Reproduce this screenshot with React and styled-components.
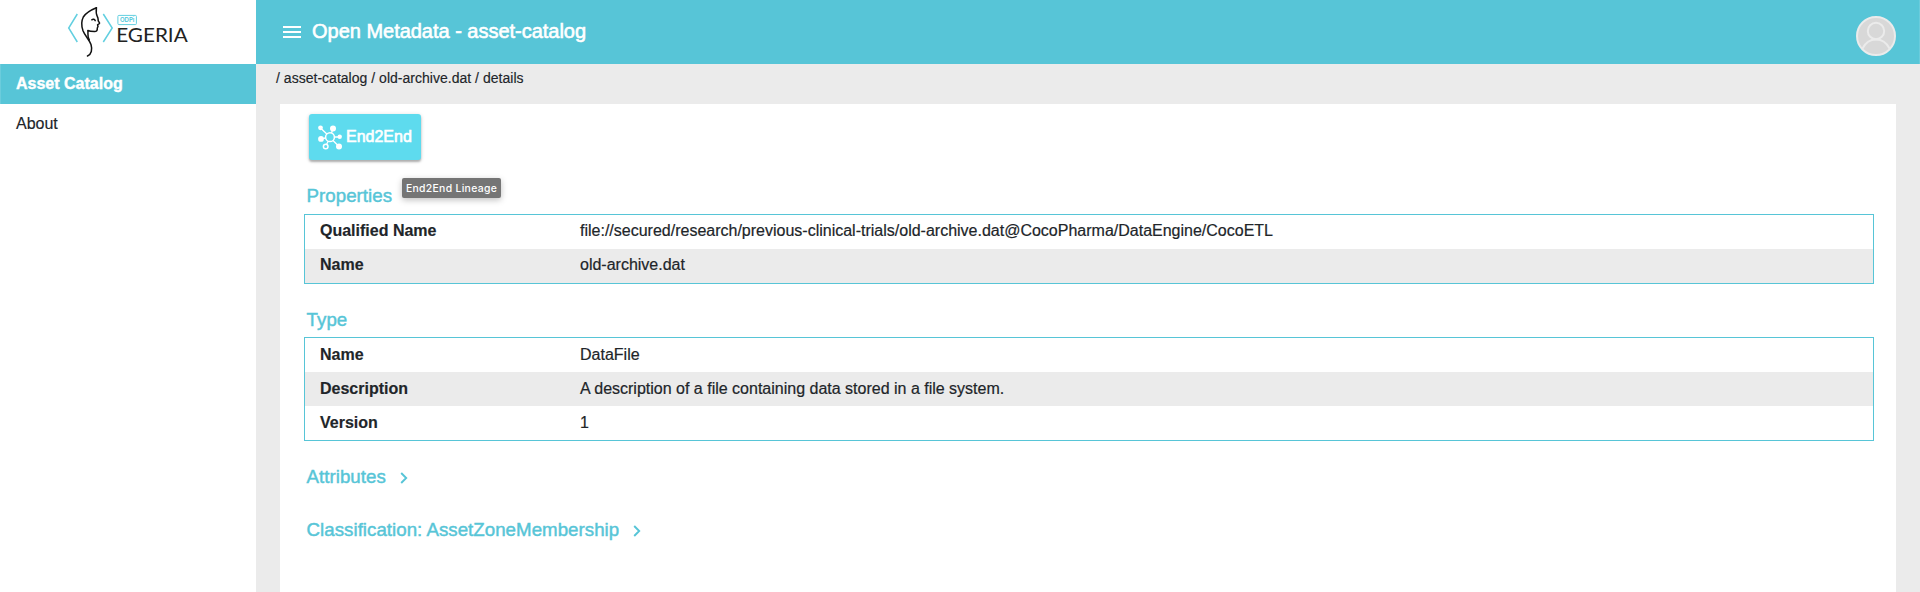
import React from "react";
import styled, { createGlobalStyle, css } from "styled-components";

const teal = "#57c5d7";
const grey = "#ebebeb";
const ink = "#212529";

const GlobalStyle = createGlobalStyle`
  * { box-sizing: border-box; }
  body {
    margin: 0;
    background: #fff;
    color: ${ink};
    font-family: "Liberation Sans", Helvetica, Arial, sans-serif;
    font-size: 16px;
  }
`;

const Shell = styled.div`
  display: flex;
  height: 592px;
  overflow: hidden;
`;

const Sidebar = styled.aside`
  width: 256px;
  flex: none;
  display: flex;
  flex-direction: column;
  background: #fff;
`;

const LogoArea = styled.div`
  height: 64px;
  padding-left: 64px;
`;

const NavItem = styled.a`
  height: 40px;
  padding: 0 15px;
  line-height: 39px;
  border-left: 1px solid transparent;
  -webkit-text-stroke: 0.15px ${ink};
  ${(p) =>
    p.$active &&
    css`
      color: #fff;
      font-weight: 700;
      background: ${teal};
      border-left-color: #6bccdc;
      -webkit-text-stroke: 0.4px #fff;
    `}
`;

const Main = styled.div`
  flex: 1;
  display: flex;
  flex-direction: column;
  background: ${grey};
`;

const Header = styled.header`
  height: 64px;
  flex: none;
  display: flex;
  align-items: flex-start;
  padding: 16px 24px 0 27px;
  background: ${teal};
  border-right: 1px solid #6bccdc;
  color: #fff;
`;

const MenuIcon = styled.svg`
  margin-top: 10px;
`;

const Title = styled.h1`
  margin: 4px 0 0 11px;
  flex: 1;
  font-size: 20px;
  line-height: 23px;
  font-weight: 400;
  letter-spacing: -0.02px;
  -webkit-text-stroke: 0.6px #fff;
`;

const Avatar = styled.svg`
  margin-right: -1px;
`;

const Breadcrumb = styled.nav`
  height: 40px;
  flex: none;
  padding: 6px 0 0 20px;
  font-size: 14px;
  line-height: 16px;
  letter-spacing: 0.02px;
  white-space: pre;
  -webkit-text-stroke: 0.15px ${ink};
`;

const Panel = styled.main`
  position: relative;
  flex: 1;
  margin: 0 24px;
  padding: 10px 22px 0 24px;
  background: #fff;
`;

const ActionButton = styled.button`
  display: flex;
  align-items: center;
  width: 112px;
  height: 46px;
  margin: 0 0 0 5px;
  padding: 0 0 0 9px;
  gap: 3px;
  border: 0;
  border-radius: 3px;
  background: #5edbee;
  color: #fff;
  font: 400 16px/18px "Liberation Sans", Arial, sans-serif;
  -webkit-text-stroke: 0.6px #fff;
  box-shadow: 0 2px 2px rgba(0, 0, 0, 0.24), 0 1px 4px rgba(0, 0, 0, 0.16);
`;

const Tooltip = styled.div`
  position: absolute;
  left: 122px;
  top: 74px;
  width: 99px;
  height: 20px;
  border-radius: 2px;
  background: #757575;
  color: #fff;
  text-align: center;
  font: 500 10.4px/22px Inter, sans-serif;
  letter-spacing: 0.32px;
  white-space: nowrap;
  box-shadow: 0 2px 6px rgba(0, 0, 0, 0.25);
`;

const Heading = styled.h3`
  display: flex;
  align-items: center;
  height: 21px;
  margin: ${(p) => p.$top}px 0 0 2.600px;
  font-size: 18.72px;
  line-height: 21px;
  font-weight: 400;
  letter-spacing: 0.02px;
  color: ${teal};
  -webkit-text-stroke: 0.45px ${teal};
`;

const Chevron = styled.svg`
  margin: 2px 0 0 14px;
`;

const Table = styled.dl`
  margin: ${(p) => p.$top}px 0 0;
  border: 1px solid ${teal};
`;

const Row = styled.div`
  display: flex;
  height: 34px;
  padding-left: 15px;
  line-height: ${(p) => p.$line}px;
  &:nth-child(even) {
    background: ${grey};
  }
`;

const Term = styled.dt`
  width: 260px;
  font-weight: 700;
  -webkit-text-stroke: 0.15px ${ink};
`;

const Value = styled.dd`
  margin: 0;
  -webkit-text-stroke: 0.2px ${ink};
`;

const Logo = () => (
  <svg width="128" height="60" viewBox="64 0 128 60" fill="none">
    <g stroke="#62cfe0" strokeWidth="1.5">
      <path d="M77.300 14L68.700 28L77.300 42" />
      <path d="M103.300 14L112.200 28L103.300 42" />
    </g>
    <g stroke="#111" strokeWidth="1.500" strokeLinecap="round" strokeLinejoin="round">
      <path d="M96.400 7.700C92 9.500 86 12.500 83.300 17C81.300 21 81.500 26.500 83 30.700C85 35.800 89.500 40 91 44.500C92.500 49.500 91.500 54.500 87.500 56" />
      <path d="M96.400 7.700C96 11 96 14 97.300 16.500C98.500 18.500 98 20 98.300 21C98.600 22 99.900 22.600 99.500 23.500C99.200 24.200 97.900 24 97.600 24.800L98 26.500L97.300 28C97.500 30.500 96.500 31.500 94.500 31.500C92 31.500 90 31.500 87.800 30.500C88.500 33.500 86.800 35.500 89.300 39.800" />
      <path d="M91.800 19.800C93 18.900 94.500 19.200 95.200 20.600" />
    </g>
    <rect x="117.900" y="15.400" width="18.500" height="9.200" rx="1" stroke="#62cfe0" />
    <text x="119.900" y="22.300" fontFamily="Inter, sans-serif" fontSize="6" fontWeight="600" fill="#4bc6da" textLength="14.500" lengthAdjust="spacingAndGlyphs">ODPi</text>
    <text x="116.200" y="42" fontFamily="Lato, sans-serif" fontSize="19" fill="#222" textLength="71.500" lengthAdjust="spacingAndGlyphs">EGERIA</text>
  </svg>
);

const GraphIcon = () => (
  <svg width="25" height="25" viewBox="0 0 25 25" fill="none" stroke="#fff">
    <circle cx="12" cy="12.200" r="4.400" strokeWidth="1.500" />
    <path d="M2.300 2.800L8.800 9M15 3.500L13.500 8M16.500 12H21.700M15 15.500L21 21.500M7.500 13L3 13.800M10.200 16.300L8.500 19.500" strokeWidth="1.300" />
    <g fill="#fff" stroke="none">
      <circle cx="2.500" cy="2.800" r="2.400" />
      <circle cx="15" cy="3.500" r="3" />
      <circle cx="21.700" cy="11.800" r="2.200" />
      <circle cx="21" cy="21.500" r="3" />
      <circle cx="3" cy="13.900" r="2.900" />
    </g>
    <circle cx="7.700" cy="21.500" r="2.300" strokeWidth="1.500" />
  </svg>
);

const ChevronRight = () => (
  <Chevron width="8" height="12" viewBox="0 0 8 12" fill="none">
    <path d="M1.200 1L6.200 6L1.200 11" stroke={teal} strokeWidth="1.900" />
  </Chevron>
);

const PropertyTable = ({ rows, top, line }) => (
  <Table $top={top}>
    {rows.map(([name, value]) => (
      <Row key={name} $line={line}>
        <Term>{name}</Term>
        <Value>{value}</Value>
      </Row>
    ))}
  </Table>
);

export default function App() {
  return (
    <>
      <GlobalStyle />
      <Shell>
        <Sidebar>
          <LogoArea><Logo /></LogoArea>
          <NavItem $active>Asset Catalog</NavItem>
          <NavItem>About</NavItem>
        </Sidebar>
        <Main>
          <Header>
            <MenuIcon width="18" height="12" viewBox="0 0 18 12" fill="#fff">
              <path d="M0 0h18v2H0zM0 5h18v2H0zM0 10h18v2H0z" />
            </MenuIcon>
            <Title>Open Metadata - asset-catalog</Title>
            <Avatar width="40" height="40" viewBox="0 0 40 40" fill="none" stroke="#ebebeb" strokeWidth="2">
              <circle cx="20" cy="20" r="19" fill="#d8d8d8" />
              <circle cx="20" cy="15" r="8.200" />
              <path d="M6.500 32.500C9.500 26.500 14 23.500 20 23.500S30.500 26.500 33.500 32.500" />
            </Avatar>
          </Header>
          <Breadcrumb>/ asset-catalog / old-archive.dat / details</Breadcrumb>
          <Panel>
            <ActionButton><GraphIcon />End2End</ActionButton>
            <Tooltip>End2End Lineage</Tooltip>
            <Heading $top={25}>Properties</Heading>
            <PropertyTable
              top={8}
              line={31}
              rows={[
                ["Qualified Name", "file://secured/research/previous-clinical-trials/old-archive.dat@CocoPharma/DataEngine/CocoETL"],
                ["Name", "old-archive.dat"],
              ]}
            />
            <Heading $top={25}>Type</Heading>
            <PropertyTable
              top={7}
              line={33}
              rows={[
                ["Name", "DataFile"],
                ["Description", "A description of a file containing data stored in a file system."],
                ["Version", "1"],
              ]}
            />
            <Heading $top={25}>Attributes<ChevronRight /></Heading>
            <Heading $top={32}>Classification: AssetZoneMembership<ChevronRight /></Heading>
          </Panel>
        </Main>
      </Shell>
    </>
  );
}
